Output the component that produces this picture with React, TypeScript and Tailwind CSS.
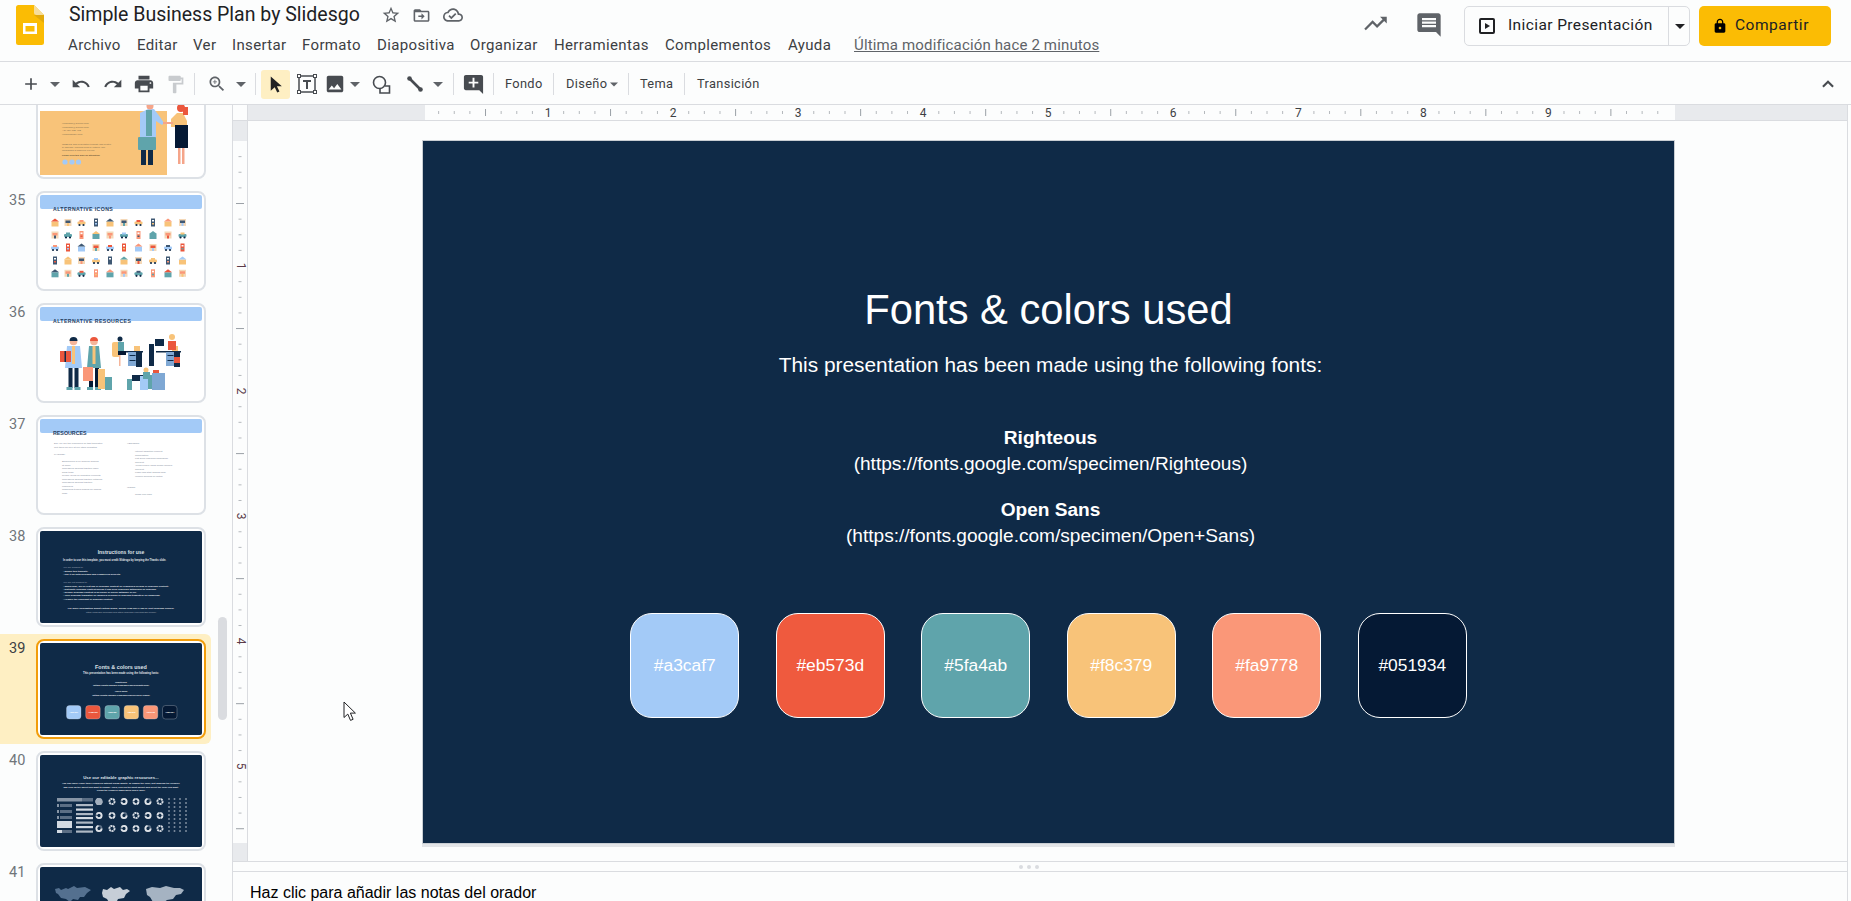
import type { ReactNode } from "react"

const ICONS = {
  add: "M19 13h-6v6h-2v-6H5v-2h6V5h2v6h6v2z",
  undo: "M12.5 8c-2.65 0-5.05.99-6.9 2.6L2 7v9h9l-3.62-3.62c1.39-1.16 3.16-1.88 5.12-1.88 3.54 0 6.55 2.31 7.6 5.5l2.37-.78C21.08 11.03 17.15 8 12.5 8z",
  redo: "M18.4 10.6C16.55 8.99 14.15 8 11.5 8c-4.65 0-8.58 3.03-9.96 7.22L3.9 16c1.05-3.19 4.05-5.5 7.6-5.5 1.95 0 3.73.72 5.12 1.88L13 16h9V7l-3.6 3.6z",
  print: "M19 8H5c-1.66 0-3 1.34-3 3v6h4v4h12v-4h4v-6c0-1.66-1.34-3-3-3zm-3 11H8v-5h8v5zm3-7c-.55 0-1-.45-1-1s.45-1 1-1 1 .45 1 1-.45 1-1 1zm-1-9H6v4h12V3z",
  paint: "M18 4V3c0-.55-.45-1-1-1H5c-.55 0-1 .45-1 1v4c0 .55.45 1 1 1h12c.55 0 1-.45 1-1V6h1v4H9v11c0 .55.45 1 1 1h2c.55 0 1-.45 1-1v-9h8V4h-3z",
  zoom: "M15.5 14h-.79l-.28-.27C15.41 12.59 16 11.11 16 9.5 16 5.91 13.09 3 9.5 3S3 5.91 3 9.5 5.91 16 9.5 16c1.61 0 3.09-.59 4.23-1.57l.27.28v.79l5 4.99L20.49 19l-4.99-5zm-6 0C7.01 14 5 11.99 5 9.5S7.01 5 9.5 5 14 7.01 14 9.5 11.99 14 9.5 14zm.5-7H9v2H7v1h2v2h1v-2h2V9h-2z",
  cursor: "M6 2v18l5-4.6 3.2 6.6 2.8-1.3-3.2-6.5H20z",
  image: "M21 19V5c0-1.1-.9-2-2-2H5c-1.1 0-2 .9-2 2v14c0 1.1.9 2 2 2h14c1.1 0 2-.9 2-2zM8.5 13.5l2.5 3.01L14.5 12l4.5 6H5l3.5-4.5z",
  commentAdd: "M22 4c0-1.1-.9-2-2-2H4c-1.1 0-2 .9-2 2v12c0 1.1.9 2 2 2h14l4 4V4zm-5 7h-4v4h-2v-4H7V9h4V5h2v4h4v2z",
  star: "M22 9.24l-7.19-.62L12 2 9.19 8.63 2 9.24l5.46 4.73L5.82 21 12 17.27 18.18 21l-1.63-7.03L22 9.24zM12 15.4l-3.76 2.27 1-4.28-3.32-2.88 4.38-.38L12 6.1l1.71 4.04 4.38.38-3.32 2.88 1 4.28L12 15.4z",
  move: "M20 6h-8l-2-2H4c-1.1 0-2 .9-2 2v12c0 1.1.9 2 2 2h16c1.1 0 2-.9 2-2V8c0-1.1-.9-2-2-2zm0 12H4V8h16v10zM12 17l4-4-4-4v3H8v2h4v3z",
  cloud: "M19.35 10.04C18.67 6.59 15.64 4 12 4 9.11 4 6.6 5.64 5.35 8.04 2.34 8.36 0 10.91 0 14c0 3.31 2.69 6 6 6h13c2.76 0 5-2.24 5-5 0-2.64-2.05-4.78-4.65-4.96zM19 18H6c-2.21 0-4-1.79-4-4 0-2.05 1.53-3.76 3.56-3.97l1.07-.11.5-.95C8.08 7.14 9.94 6 12 6c2.62 0 4.88 1.86 5.39 4.43l.3 1.5 1.53.11c1.56.1 2.78 1.41 2.78 2.96 0 1.65-1.35 3-3 3zm-9-3.82l-2.09-2.09L6.5 13.5 10 17l6.01-6.01-1.41-1.41z",
  trend: "M16 6l2.29 2.29-4.88 4.88-4-4L2 16.59 3.41 18l6-6 4 4 6.3-6.29L22 12V6z",
  comment: "M21.99 4c0-1.1-.89-2-1.99-2H4c-1.1 0-2 .9-2 2v12c0 1.1.9 2 2 2h14l4 4-.01-18zM18 14H6v-2h12v2zm0-3H6V9h12v2zm0-3H6V6h12v2z",
  lock: "M18 8h-1V6c0-2.76-2.24-5-5-5S7 3.24 7 6v2H6c-1.1 0-2 .9-2 2v10c0 1.1.9 2 2 2h12c1.1 0 2-.9 2-2V10c0-1.1-.9-2-2-2zm-6 9c-1.1 0-2-.9-2-2s.9-2 2-2 2 .9 2 2-.9 2-2 2zm3.1-9H8.9V6c0-1.71 1.39-3.1 3.1-3.1 1.71 0 3.1 1.39 3.1 3.1v2z",
  less: "M12 7.5l-7 7 1.8 1.8L12 11.1l5.2 5.2 1.8-1.8z",
}

function Icon({ name, size = 24, color = "#474b50", className = "" }: { name: keyof typeof ICONS; size?: number; color?: string; className?: string }) {
  return (
    <svg width={size} height={size} viewBox="0 0 24 24" className={`shrink-0 ${className}`}>
      <path d={ICONS[name]} fill={color} fillRule="evenodd" />
    </svg>
  )
}

function Caret({ className = "", color = "#5f6368", w = 10 }: { className?: string; color?: string; w?: number }) {
  return (
    <svg width={w} height={5} viewBox="0 0 10 5" className={`shrink-0 ${className}`}>
      <polygon points="0,0 10,0 5,5" fill={color} />
    </svg>
  )
}

function Sep({ className = "" }: { className?: string }) {
  return <div className={`w-px h-[22px] bg-[#dadce0] shrink-0 ${className}`} />
}

const MENU: [string, string][] = [
  ["Archivo", "w-[69px]"],
  ["Editar", "w-[56px]"],
  ["Ver", "w-[39px]"],
  ["Insertar", "w-[70px]"],
  ["Formato", "w-[75px]"],
  ["Diapositiva", "w-[93px]"],
  ["Organizar", "w-[84px]"],
  ["Herramientas", "w-[111px]"],
  ["Complementos", "w-[123px]"],
  ["Ayuda", "w-[66px]"],
]

function Header() {
  return (
    <header className="h-[62px] shrink-0 flex border-b border-[#dadce0] relative">
      <svg width="28" height="40" viewBox="0 0 28 40" className="ml-[16px] mt-[5px] shrink-0">
        <path d="M2.500 0H18l10 10v27.500a2.500 2.500 0 0 1-2.500 2.500h-23A2.500 2.500 0 0 1 0 37.500v-35A2.500 2.500 0 0 1 2.500 0z" fill="#fbbc04" />
        <path d="M18 0l10 10h-7.500A2.500 2.500 0 0 1 18 7.500z" fill="#f6dd9b" />
        <path d="M18 10h10v8z" fill="#e2a90a" />
        <path d="M7 18h14v11H7z" fill="#fff" />
        <rect x="9.500" y="21" width="9" height="5.500" fill="#fbbc04" />
      </svg>
      <div className="ml-[24px] flex flex-col">
        <div className="flex items-center h-[30px]">
          <div className="pl-[1px] font-['Roboto',sans-serif] text-[19.500px] text-[#202124] w-[293px] leading-[30px] whitespace-nowrap">Simple Business Plan by Slidesgo</div>
          <Icon name="star" size={20} color="#5f6368" className="ml-[20px]" />
          <Icon name="move" size={19} color="#5f6368" className="ml-[11px]" />
          <Icon name="cloud" size={20} color="#5f6368" className="ml-[12px]" />
        </div>
        <div className="flex items-center h-[30px] font-['Roboto',sans-serif] text-[15px] text-[#3c4043] tracking-[0.35px]">
          {MENU.map(([label, width]) => (
            <div key={label} className={`${width} shrink-0`}>{label}</div>
          ))}
          <div className="underline text-[#5f6368] whitespace-nowrap tracking-[0.15px]">Última modificación hace 2 minutos</div>
        </div>
      </div>
      <div className="ml-auto flex items-start pt-[6px] pr-[20px]">
        <Icon name="trend" size={27} color="#5f6368" className="mt-[4px] mr-[26px]" />
        <Icon name="comment" size={28} color="#5f6368" className="mt-[5px] mr-[21px]" />
        <div className="flex h-[40px] w-[226px] border border-[#dadce0] rounded-[5px] items-center font-['Roboto',sans-serif] text-[15.500px] tracking-[0.4px] text-[#202124]">
          <div className="w-[204px] h-full flex items-center border-r border-[#dadce0] pl-[14px]">
            <svg width="16" height="16" viewBox="0 0 16 16" className="shrink-0">
              <rect x="1" y="1" width="14" height="14" rx="1" fill="none" stroke="#202124" strokeWidth="2" />
              <polygon points="6,5 11,8 6,11" fill="#202124" />
            </svg>
            <span className="ml-[13px] whitespace-nowrap">Iniciar Presentación</span>
          </div>
          <Caret color="#202124" className="ml-[6px]" />
        </div>
        <div className="ml-[9px] h-[40px] w-[132px] bg-[#fbbc04] rounded-[5px] flex items-center pl-[13px] font-['Roboto',sans-serif] text-[15.500px] tracking-[0.5px] text-[#202124]">
          <Icon name="lock" size={16} color="#000" />
          <span className="ml-[7px]">Compartir</span>
        </div>
      </div>
    </header>
  )
}

function Toolbar() {
  const label = "font-['Roboto',sans-serif] text-[12.800px] tracking-[0.35px] text-[#3c4043] shrink-0"
  return (
    <div className="h-[43px] shrink-0 flex items-center pt-[2px] border-b border-[#dadce0] bg-[#fcfdfd]">
      <Icon name="add" size={20} className="ml-[21px]" />
      <Caret className="ml-[9px]" />
      <Icon name="undo" size={20} className="ml-[11px]" />
      <Icon name="redo" size={20} className="ml-[12px]" />
      <Icon name="print" size={22} className="ml-[10px]" />
      <Icon name="paint" size={21} color="#c8cbce" className="ml-[10px]" />
      <Sep className="ml-[8px]" />
      <Icon name="zoom" size={20} color="#5f6368" className="ml-[12px]" />
      <Caret className="ml-[9px]" />
      <Sep className="ml-[9px]" />
      <div className="ml-[5px] w-[29px] h-[29px] rounded-[3px] bg-[#feefc3] flex items-center justify-center shrink-0">
        <Icon name="cursor" size={19} color="#202124" />
      </div>
      <svg width="20" height="20" viewBox="0 0 20 20" className="ml-[7px] shrink-0">
        <rect x="2" y="2" width="16" height="16" fill="none" stroke="#474b50" strokeWidth="1.500" />
        <rect x="0.500" y="0.500" width="3" height="3" fill="#fff" stroke="#474b50" />
        <rect x="16.500" y="0.500" width="3" height="3" fill="#fff" stroke="#474b50" />
        <rect x="0.500" y="16.500" width="3" height="3" fill="#fff" stroke="#474b50" />
        <rect x="16.500" y="16.500" width="3" height="3" fill="#fff" stroke="#474b50" />
        <path d="M6 6h8v2h-3v7H9V8H6z" fill="#474b50" />
      </svg>
      <Icon name="image" size={22} className="ml-[7px]" />
      <Caret className="ml-[4px]" />
      <svg width="19" height="19" viewBox="0 0 19 19" className="ml-[12px] shrink-0">
        <path d="M13 11h4.500v7H8v-4" fill="none" stroke="#474b50" strokeWidth="1.600" />
        <circle cx="7.500" cy="7.500" r="6" fill="none" stroke="#474b50" strokeWidth="1.600" />
      </svg>
      <svg width="18" height="18" viewBox="0 0 18 18" className="ml-[15px] shrink-0">
        <line x1="3" y1="3" x2="15" y2="15" stroke="#474b50" strokeWidth="2.600" />
        <circle cx="3.500" cy="3.500" r="2.300" fill="#474b50" />
        <circle cx="14.500" cy="14.500" r="2.300" fill="#474b50" />
      </svg>
      <Caret className="ml-[9px]" />
      <Sep className="ml-[10px]" />
      <Icon name="commentAdd" size={23} className="ml-[8px]" />
      <Sep className="ml-[8px]" />
      <div className={`${label} ml-[11px] w-[48px]`}>Fondo</div>
      <Sep />
      <div className={`${label} ml-[12px] w-[62px] flex items-center`}>
        Diseño
        <Caret w={8} className="ml-[3px]" />
      </div>
      <Sep />
      <div className={`${label} ml-[11px] w-[44px]`}>Tema</div>
      <Sep />
      <div className={`${label} ml-[12px]`}>Transición</div>
      <Icon name="less" size={20} color="#474b50" className="ml-auto mr-[13px]" />
    </div>
  )
}

const STEP = 15.63

function HRulerMarks() {
  const marks: ReactNode[] = []
  for (let i = 1; i < 80; i++) {
    const x = i * STEP - 2
    if (i % 8 === 0) {
      marks.push(
        <text key={i} x={x} y="11.500" textAnchor="middle" fontSize="12" fontFamily="Roboto, sans-serif" fill="#3c4043">
          {i / 8}
        </text>,
      )
    } else if (i % 4 === 0) {
      marks.push(<line key={i} x1={x} x2={x} y1="4" y2="11" stroke="#9aa0a6" />)
    } else {
      marks.push(<line key={i} x1={x} x2={x} y1="6" y2="9" stroke="#b5b9bd" />)
    }
  }
  return (
    <svg width="1250" height="15" viewBox="0 0 1250 15" className="shrink-0 bg-[#fcfdfd]">
      {marks}
    </svg>
  )
}

function VRulerMarks() {
  const marks: ReactNode[] = []
  for (let i = 1; i < 45; i++) {
    const y = i * STEP
    if (i % 8 === 0) {
      marks.push(
        <text key={i} x="0" y="0" transform={`translate(3.500 ${y}) rotate(90)`} textAnchor="middle" fontSize="12" fontFamily="Roboto, sans-serif" fill="#5a3a48">
          {i / 8}
        </text>,
      )
    } else if (i % 4 === 0) {
      marks.push(<line key={i} x1="3" x2="11" y1={y} y2={y} stroke="#9aa0a6" />)
    } else {
      marks.push(<line key={i} x1="5.500" x2="8.500" y1={y} y2={y} stroke="#b5b9bd" />)
    }
  }
  return (
    <svg width="14" height="702" viewBox="0 0 14 702" className="shrink-0">
      {marks}
    </svg>
  )
}

const SWATCHES = [
  ["#a3caf7", "bg-[#a3caf7]"],
  ["#eb573d", "bg-[#ef5a3e]"],
  ["#5fa4ab", "bg-[#5fa4ab]"],
  ["#f8c379", "bg-[#f8c379]"],
  ["#fa9778", "bg-[#fa9778]"],
  ["#051934", "bg-[#051934]"],
]

function Slide() {
  return (
    <div className="ml-[174px] mt-[19px] w-[1253px] h-[704px] shrink-0 border border-[#c9ced3] bg-[#0f2a47] text-white text-center font-['Liberation_Sans',Arial,sans-serif] shadow-[0_3px_0_#e3e5e8]">
      <div className="mt-[148px] text-[41.700px] leading-[42px]">Fonts &amp; colors used</div>
      <div className="mt-[21px] pl-[4px] text-[20.850px] leading-[26px]">This presentation has been made using the following fonts:</div>
      <div className="mt-[47px] pl-[4px] text-[19.100px] leading-[26px] font-bold">Righteous</div>
      <div className="pl-[4px] text-[19.100px] leading-[26px]">(https://fonts.google.com/specimen/Righteous)</div>
      <div className="mt-[20px] pl-[4px] text-[19.100px] leading-[26px] font-bold">Open Sans</div>
      <div className="pl-[4px] text-[19.100px] leading-[26px]">(https://fonts.google.com/specimen/Open+Sans)</div>
      <div className="mt-[64px] flex justify-center gap-[36.500px]">
        {SWATCHES.map(([hex, bg]) => (
          <div key={hex} className={`${bg} w-[109px] h-[105px] rounded-[22px] border border-white flex items-center justify-center text-[17.400px]`}>
            {hex}
          </div>
        ))}
      </div>
    </div>
  )
}

/* --- miniaturas --- */

const SMALL_COLORS = ["#f8c379", "#eb573d", "#5fa4ab", "#3f5873", "#a3caf7", "#fa9778"]
const FONT = "Liberation Sans, Arial, sans-serif"

function T({ x, y, s, fill, bold, anchor, children }: { x: number; y: number; s: number; fill: string; bold?: boolean; anchor?: "middle" | "start"; children: ReactNode }) {
  return (
    <text x={x} y={y} fontSize={s} fill={fill} fontWeight={bold ? 700 : 400} textAnchor={anchor ?? "start"} fontFamily={FONT}>
      {children}
    </text>
  )
}

function Person({ x, y, h, shirt, hair, legs = "#0f2a47", w = 15 }: { x: number; y: number; h: number; shirt: string; hair: string; legs?: string; w?: number }) {
  const u = h / 54
  return (
    <g>
      <rect x={x + w / 2 - 5 * u} y={y + 28 * u} width={4 * u} height={24 * u} fill={legs} />
      <rect x={x + w / 2 + 1 * u} y={y + 28 * u} width={4 * u} height={24 * u} fill={legs} />
      <rect x={x + w / 2 - 7 * u} y={y + 51 * u} width={6 * u} height={3 * u} fill="#5fa4ab" />
      <rect x={x + w / 2 + 1 * u} y={y + 51 * u} width={6 * u} height={3 * u} fill="#5fa4ab" />
      <path d={`M${x + 2} ${y + 10 * u}L${x + w - 2} ${y + 10 * u}L${x + w} ${y + 32 * u}L${x} ${y + 32 * u}z`} fill={shirt} />
      <rect x={x + w / 2 - 1.500} y={y + 10 * u} width="3" height={18 * u} fill="#f8c379" />
      <circle cx={x + w / 2} cy={y + 5.500 * u} r={3.800 * u} fill="#f5b59a" />
      <path d={`M${x + w / 2 - 4 * u} ${y + 5 * u}a${4 * u} ${4 * u} 0 0 1 ${8 * u} 0z`} fill={hair} />
    </g>
  )
}

function Desk({ x, y }: { x: number; y: number }) {
  return (
    <g>
      <rect x={x + 8} y={y + 14} width={25} height={1.500} fill="#0f2a47" />
      <rect x={x + 18} y={y + 15} width={9} height={14} fill="#7fa8d4" />
      <rect x={x + 26} y={y + 15} width={6} height={15} fill="#0f2a47" />
      <rect x={x + 19.500} y={y + 18} width={6} height={1} fill="#0f2a47" />
      <rect x={x + 19.500} y={y + 23} width={6} height={1} fill="#0f2a47" />
      <rect x={x + 24} y={y + 9} width={6} height={5} fill="#f8c379" />
    </g>
  )
}

function SlideHeading({ label }: { label: string }) {
  return (
    <g>
      <rect x="0" y="0" width="162" height="14" rx="2" fill="#a3caf7" />
      <text x="13" y="15.500" fontSize="5.200" fontWeight="700" letterSpacing="0.4" fontFamily={FONT} fill="#27405f">
        {label}
      </text>
    </g>
  )
}

function Thumb34() {
  const ink = "#7d6c4e"
  return (
    <>
      <rect x="0" y="28" width="127" height="64" fill="#f8c379" />
      <T x={22} y={41} s={2.500} fill={ink}>yourname@freepik.com</T>
      <T x={22} y={44.500} s={2.500} fill={ink}>yourname@freepik.com</T>
      <T x={22} y={48} s={2.500} fill={ink}>+34 654 321 432</T>
      <T x={22} y={52} s={2.500} fill={ink}>yourcompany.com</T>
      <T x={22} y={62} s={2.200} fill={ink}>CREDITS: This presentation template was created</T>
      <T x={22} y={64.800} s={2.200} fill={ink}>by Slidesgo, including icons by Flaticon, and</T>
      <T x={22} y={67.600} s={2.200} fill={ink}>infographics &amp; images by Freepik.</T>
      <T x={22} y={73} s={2.200} fill="#5f5138" bold>Please keep this slide for attribution.</T>
      <circle cx="25" cy="79" r="2.600" fill="#a3caf7" />
      <circle cx="32" cy="79" r="2.600" fill="#a3caf7" />
      <circle cx="38.500" cy="79" r="2.600" fill="#a3caf7" />
      <rect x="101" y="66" width="5" height="16" fill="#0f2a47" />
      <rect x="108" y="66" width="5" height="16" fill="#0f2a47" />
      <path d="M100 30l8-4h6l6 8 4 6-2 2-6-4v16h-16z" fill="#a3caf7" />
      <rect x="106" y="27" width="6" height="26" fill="#5fa4ab" />
      <circle cx="110" cy="23" r="3.500" fill="#f5a58a" />
      <rect x="98" y="54" width="18" height="13" rx="1" fill="#5fa4ab" />
      <path d="M131 36l6-6h6l4 8v6h-16z" fill="#f8c379" />
      <rect x="123" y="39" width="10" height="2" fill="#f5a58a" />
      <rect x="135" y="42" width="13" height="23" fill="#051934" />
      <rect x="138" y="65" width="2.500" height="16" fill="#f5a58a" />
      <rect x="142" y="65" width="2.500" height="16" fill="#f5a58a" />
      <circle cx="141" cy="25" r="4" fill="#eb573d" />
      <rect x="143" y="24" width="5" height="8" fill="#eb573d" />
    </>
  )
}

function Thumb35() {
  const cols = [15, 28, 41.500, 56, 70, 84, 98.500, 113, 128, 142.500]
  const rows = [27.500, 40, 52.500, 65.500, 78.300]
  return (
    <>
      <SlideHeading label="ALTERNATIVE ICONS" />
      {rows.map((y, r) =>
        cols.map((x, c) => {
          const a = SMALL_COLORS[(r * 5 + c * 3) % 6]
          const b = SMALL_COLORS[(r * 2 + c * 5 + 1) % 6]
          const kind = (r * 7 + c * 3) % 4
          if (kind === 0) {
            return (
              <g key={`${r}-${c}`}>
                <rect x={x - 3.500} y={y - 1} width="7" height="5" fill={a} />
                <path d={`M${x - 4} ${y - 1}L${x} ${y - 4}L${x + 4} ${y - 1}z`} fill={b} />
              </g>
            )
          }
          if (kind === 1) {
            return (
              <g key={`${r}-${c}`}>
                <rect x={x - 2} y={y - 4} width="4" height="8" fill={a} />
                <rect x={x - 1} y={y - 2.500} width="2" height="1.500" fill="#fff" />
                <rect x={x - 1} y={y + 0.500} width="2" height="1.500" fill={b} />
              </g>
            )
          }
          if (kind === 2) {
            return (
              <g key={`${r}-${c}`}>
                <rect x={x - 4} y={y - 1} width="8" height="3" rx="1" fill={a} />
                <circle cx={x - 2} cy={y + 2.500} r="1.100" fill="#0f2a47" />
                <circle cx={x + 2} cy={y + 2.500} r="1.100" fill="#0f2a47" />
                <rect x={x - 2} y={y - 2.500} width="4" height="2" fill={b} />
              </g>
            )
          }
          return (
            <g key={`${r}-${c}`}>
              <rect x={x - 3.500} y={y - 3.500} width="7" height="7" fill="#f4d8b8" />
              <rect x={x - 2.500} y={y - 2} width="5" height="2.500" fill={a} />
              <rect x={x - 1} y={y + 0.500} width="2" height="3" fill={b} />
            </g>
          )
        }),
      )}
    </>
  )
}

function Thumb36() {
  return (
    <>
      <SlideHeading label="ALTERNATIVE RESOURCES" />
      <Person x={25} y={29} h={54} w={17} shirt="#a3caf7" hair="#0f2a47" />
      <rect x="20" y="44" width="11" height="11" fill="#eb573d" />
      <rect x="24.500" y="44" width="1.500" height="11" fill="#0f2a47" />
      <Person x={47} y={29} h={54} w={14} shirt="#5fa4ab" hair="#eb573d" legs="#051934" />
      <rect x="43" y="60" width="10" height="14" fill="#fa9778" />
      <rect x="58" y="62" width="7" height="20" fill="#f8c379" />
      <rect x="65" y="70" width="7" height="13" fill="#5fa4ab" />
      <Desk x={70} y={30} />
      <rect x="72" y="35" width="8" height="15" rx="2" fill="#f8c379" />
      <rect x="78" y="35" width="6" height="9" fill="#5fa4ab" />
      <rect x="78" y="44" width="8" height="4" fill="#051934" />
      <rect x="79" y="48" width="1.500" height="11" fill="#f5b59a" />
      <circle cx="80" cy="32" r="2.500" fill="#0f2a47" />
      <rect x="109" y="37" width="5" height="22" fill="#0f2a47" />
      <rect x="115" y="32" width="9" height="7" fill="#0f2a47" />
      <Desk x={108} y={30} />
      <circle cx="132" cy="30" r="3" fill="#f8c379" />
      <rect x="128" y="34" width="8" height="9" fill="#eb573d" />
      <rect x="134" y="50" width="6" height="6" fill="#eb573d" />
      <rect x="87" y="72" width="5" height="11" fill="#5fa4ab" />
      <rect x="92" y="68" width="12" height="6" fill="#0f2a47" />
      <rect x="100" y="69" width="8" height="14" fill="#a3caf7" />
      <rect x="108" y="68" width="4" height="14" fill="#5fa4ab" />
      <rect x="112" y="66" width="13" height="17" fill="#7fa8d4" />
      <circle cx="106" cy="63" r="2.500" fill="#f8c379" />
      <rect x="103" y="65" width="7" height="7" fill="#5fa4ab" />
      <rect x="113" y="63" width="6" height="3" fill="#eb573d" />
    </>
  )
}

function Thumb37() {
  const ink = "#7f8b9b"
  const left = [
    "Background of co-workers working",
    "at home",
    "Colleagues working together office",
    "small team",
    "People laying on animated elements",
    "Colleagues working together outdoors",
    "Colleagues working together",
    "coworkers",
    "Coworking team's landing for landing",
    "page",
  ]
  const right = [
    "Internet addiction concept", "Composition",
    "Flat sleep insomnia infographic", "Concept",
    "Young people using mobile phones", "Concept",
    "Flash card start landing page", "Women working on laptop",
  ]
  return (
    <>
      <rect x="0" y="0" width="162" height="14" rx="2" fill="#a3caf7" />
      <T x={13} y={15.500} s={5.300} bold fill="#27405f">RESOURCES</T>
      <T x={14} y={25} s={2.500} fill={ink}>Did you like the resources on this template?</T>
      <T x={14} y={29} s={2.500} fill={ink}>Get them for free at our other websites.</T>
      <T x={14} y={36} s={2.500} fill={ink}>PHOTOS:</T>
      {left.map((line, i) => (
        <T key={i} x={22} y={43 + i * 3.500} s={2.400} fill={ink}>{line}</T>
      ))}
      <T x={87} y={25} s={2.500} fill={ink}>VECTORS:</T>
      {right.map((line, i) => (
        <T key={i} x={95} y={33 + i * 3.500} s={2.400} fill={ink}>{line}</T>
      ))}
      <T x={87} y={69} s={2.500} fill={ink}>ICONS:</T>
      <T x={95} y={76} s={2.400} fill={ink}>Cross icon pack</T>
    </>
  )
}

function Thumb38() {
  const lt = "#e6e9ec"
  const dim = "#a3aebb"
  return (
    <>
      <rect width="162" height="92" rx="2" fill="#0f2a47" />
      <T x={81} y={23} s={5} bold anchor="middle" fill="#dfe3e8">Instructions for use</T>
      <T x={23} y={30} s={2.600} bold fill={lt}>In order to use this template, you must credit Slidesgo by keeping the Thanks slide.</T>
      <T x={23} y={37} s={2.400} fill={dim}>You are allowed to:</T>
      <T x={23} y={40.500} s={2.400} bold fill={lt}>- Modify this template.</T>
      <T x={23} y={44} s={2.400} bold fill={lt}>- Use it for both personal and commercial projects.</T>
      <T x={23} y={51.500} s={2.400} fill={dim}>You are not allowed to:</T>
      <T x={23} y={55.500} s={2.400} bold fill={lt}>- Sublicense, sell or rent any of Slidesgo Content (or a modified version of Slidesgo Content).</T>
      <T x={23} y={58.800} s={2.400} bold fill={lt}>- Distribute Slidesgo Content unless it has been expressly authorized by Slidesgo.</T>
      <T x={23} y={62.100} s={2.400} bold fill={lt}>- Include Slidesgo Content in an online or offline database or file.</T>
      <T x={23} y={65.400} s={2.400} bold fill={lt}>- Offer Slidesgo templates (or modified versions of Slidesgo templates) for download.</T>
      <T x={23} y={68.700} s={2.400} bold fill={lt}>- Acquire the copyright of Slidesgo Content.</T>
      <T x={81} y={77.500} s={2.500} bold anchor="middle" fill={lt}>For more information about editing slides, please read our FAQs or visit Slidesgo School:</T>
      <T x={81} y={81.800} s={2.400} anchor="middle" fill={dim}>https://slidesgo.com/faqs and https://slidesgo.com/slidesgo-school</T>
    </>
  )
}

function Thumb39() {
  const fills = ["#a3caf7", "#eb573d", "#5fa4ab", "#f8c379", "#fa9778", "#051934"]
  const lt = "#e6e9ec"
  return (
    <>
      <rect width="162" height="92" rx="2" fill="#0f2a47" />
      <T x={81} y={25.500} s={5.400} bold anchor="middle" fill="#dfe3e8">Fonts &amp; colors used</T>
      <T x={81} y={31} s={2.700} bold anchor="middle" fill={lt}>This presentation has been made using the following fonts:</T>
      <T x={81} y={39.500} s={2.400} bold anchor="middle" fill={lt}>Righteous</T>
      <T x={81} y={43} s={2.500} bold anchor="middle" fill={lt}>(https://fonts.google.com/specimen/Righteous)</T>
      <T x={81} y={49} s={2.400} bold anchor="middle" fill={lt}>Open Sans</T>
      <T x={81} y={52.500} s={2.500} bold anchor="middle" fill={lt}>(https://fonts.google.com/specimen/Open+Sans)</T>
      {fills.map((f, i) => (
        <g key={f}>
          <rect x={26.500 + i * 19.200} y="62.500" width="14.500" height="13.500" rx="3" fill={f} stroke="#d5dae0" strokeWidth="0.300" />
          <T x={33.750 + i * 19.200} y={70} s={2.300} bold anchor="middle" fill="#fff">{`#${f.slice(1)}`}</T>
        </g>
      ))}
    </>
  )
}

function Donut({ x, y, kind }: { x: number; y: number; kind: number }) {
  const circ = 2 * Math.PI * 2.600
  const dash = [`${circ * 0.7} ${circ * 0.3}`, `${circ * 0.1} ${circ * 0.06}`, `${circ * 0.45} ${circ * 0.1}`, `${circ * 0.2} ${circ * 0.05}`][kind % 4]
  return (
    <g>
      <circle cx={x} cy={y} r={2.600} fill="none" stroke="#5c6f85" strokeWidth={1.600} />
      <circle cx={x} cy={y} r={2.600} fill="none" stroke="#dfe3e8" strokeWidth={1.800} strokeDasharray={dash} />
    </g>
  )
}

function Thumb40() {
  const dx = [59, 72, 84, 96, 108, 120]
  const dy = [46.500, 60.500, 73.500]
  const ix = [129, 134.500, 140, 146]
  const iy = [44, 48, 52, 56, 60, 64, 68, 72, 76]
  const lt = "#e6e9ec"
  return (
    <>
      <rect width="162" height="92" rx="2" fill="#0f2a47" />
      <T x={81} y={24} s={4.300} bold anchor="middle" fill="#dfe3e8">Use our editable graphic resources...</T>
      <T x={81} y={29} s={2.300} bold anchor="middle" fill={lt}>You can easily resize these resources without losing quality. To change the color, just ungroup the resource</T>
      <T x={81} y={32.500} s={2.300} bold anchor="middle" fill={lt}>and click on the object you want to change. Then, click on the paint bucket and select the color you want.</T>
      <T x={81} y={36} s={2.300} bold anchor="middle" fill={lt}>Group the resource again when you're done.</T>
      <rect x="17" y="43" width="25" height="3.500" fill="#8795a6" />
      <rect x="42" y="43" width="11" height="3.500" fill="#5c6f85" />
      {[49, 55, 61].map((y) => (
        <rect key={y} x="20" y={y} width="12" height="3" fill="#5c6f85" />
      ))}
      <rect x="17" y="49" width="2" height="3" fill="#8795a6" />
      <rect x="17" y="55" width="2" height="3" fill="#8795a6" />
      <rect x="17" y="61" width="2" height="3" fill="#8795a6" />
      <rect x="17" y="66" width="15" height="7" fill="#d3dae2" />
      <rect x="17" y="75" width="5" height="3" fill="#d3dae2" />
      <rect x="22" y="75" width="10" height="3" fill="#5c6f85" />
      {[49, 53.500, 58, 62, 66.500, 71, 75.500].map((y, i) => (
        <rect key={y} x="36" y={y} width="17" height="2.200" fill={i % 2 === 0 ? "#aeb8c4" : "#d3dae2"} />
      ))}
      {dy.map((y, r) =>
        dx.map((x, c) => <Donut key={`${r}-${c}`} x={x} y={y} kind={r * 2 + c} />),
      )}
      <circle cx={59} cy={46.500} r={3.500} fill="#a3afbd" />
      {iy.map((y) =>
        ix.map((x) => <rect key={`${x}-${y}`} x={x - 0.800} y={y - 0.800} width="1.600" height="1.600" fill="#8f9cab" />),
      )}
    </>
  )
}

function Thumb41() {
  return (
    <>
      <rect width="162" height="92" rx="2" fill="#0f2a47" />
      <path d="M15 22l4-1 2 2 5-2 2 1 6-3 3 2 8-1 6 3-4 3-3 4-4 0-2 3-5-1-3 3-4-3-5-1-3-4-2-1z" fill="#54708f" />
      <path d="M63 22l4 1 4-3 3 2 6-2 3 3 4-1 3 2-4 3-2 4-6 1-2 4-6 1-3-5-4-2-1-4z" fill="#c6ced7" />
      <path d="M106 22l6-2 8 1 6-2 8 2 6 0 4 2-3 4-5 1-3 4-6 1-4 3-5-2-5 1-3-5-3-2z" fill="#a5b3c2" />
    </>
  )
}

function Card({ selected, children }: { selected?: boolean; children: ReactNode }) {
  return (
    <div className={`w-[170px] h-[100px] rounded-[8px] border-2 p-[2px] bg-white shrink-0 ${selected ? "border-[#f29d0b]" : "border-[#dde1e6]"}`}>
      <svg width="162" height="92" viewBox="0 0 162 92" className="block">
        {children}
      </svg>
    </div>
  )
}

const THUMBS: [string, ReactNode][] = [
  ["", <Thumb34 />],
  ["35", <Thumb35 />],
  ["36", <Thumb36 />],
  ["37", <Thumb37 />],
  ["38", <Thumb38 />],
  ["39", <Thumb39 />],
  ["40", <Thumb40 />],
  ["41", <Thumb41 />],
]

function Sidebar() {
  return (
    <aside className="w-[233px] shrink-0 border-r border-[#dadce0] overflow-hidden relative bg-[#fcfdfd]">
      <div className="-mt-[31px] flex flex-col gap-[2px]">
        {THUMBS.map(([n, thumb], i) => (
          <div key={i} className={`h-[110px] w-[211px] pt-[5px] flex shrink-0 ${n === "39" ? "bg-[#feefc3] rounded-r-[6px]" : ""}`}>
            <div className={`w-[36px] pl-[9px] pt-[2px] font-['Roboto',sans-serif] text-[14.500px] leading-[16px] ${n === "39" ? "text-[#3c4043]" : "text-[#70757a]"}`}>{n}</div>
            <Card selected={n === "39"}>{thumb}</Card>
          </div>
        ))}
      </div>
      <div className="absolute left-[218px] top-[512px] w-[9px] h-[103px] rounded-full bg-[#dadce0]" />
    </aside>
  )
}

export default function App() {
  return (
    <div className="relative w-[1851px] h-[901px] overflow-hidden flex flex-col bg-[#fcfdfd]">
      <Header />
      <Toolbar />
      <div className="h-[796px] flex">
        <Sidebar />
        <div className="w-[1615px] shrink-0 border-r border-[#dadce0] flex flex-col">
          <div className="h-[757px] flex shrink-0 border-b border-[#dadce0]">
            {/* regla vertical */}
            <div className="w-[15px] shrink-0 border-r border-[#dadce0] flex flex-col">
              <div className="h-[16px] border-b border-[#dadce0] shrink-0" />
              <div className="h-[20px] bg-[#e8eaed] shrink-0" />
              <VRulerMarks />
              <div className="flex-1 bg-[#e8eaed]" />
            </div>
            <div className="flex-1 flex flex-col">
              {/* regla horizontal */}
              <div className="h-[16px] flex shrink-0 border-b border-[#dadce0]">
                <div className="w-[177px] bg-[#e8eaed] shrink-0" />
                <HRulerMarks />
                <div className="flex-1 bg-[#e8eaed]" />
              </div>
              <Slide />
            </div>
          </div>
          <div className="h-[10px] shrink-0 border-b border-[#dadce0] flex items-center justify-center gap-[4px] pr-[22px]">
            <div className="w-[4px] h-[4px] rounded-full bg-[#dadce0]" />
            <div className="w-[4px] h-[4px] rounded-full bg-[#dadce0]" />
            <div className="w-[4px] h-[4px] rounded-full bg-[#dadce0]" />
          </div>
          <div className="pl-[17px] pt-[11px] font-['Liberation_Sans',Arial,sans-serif] text-[16px] leading-[20px] text-black">
            Haz clic para añadir las notas del orador
          </div>
        </div>
      </div>
      {/* puntero del ratón */}
      <svg width="14" height="21" viewBox="0 0 14 21" className="absolute left-[343px] top-[701px]">
        <path d="M1 1v15.500l3.800-3.400 2.700 6.300 2.600-1.100-2.700-6.200h5z" fill="#fff" stroke="#202124" strokeWidth="1" strokeLinejoin="round" />
      </svg>
    </div>
  )
}
